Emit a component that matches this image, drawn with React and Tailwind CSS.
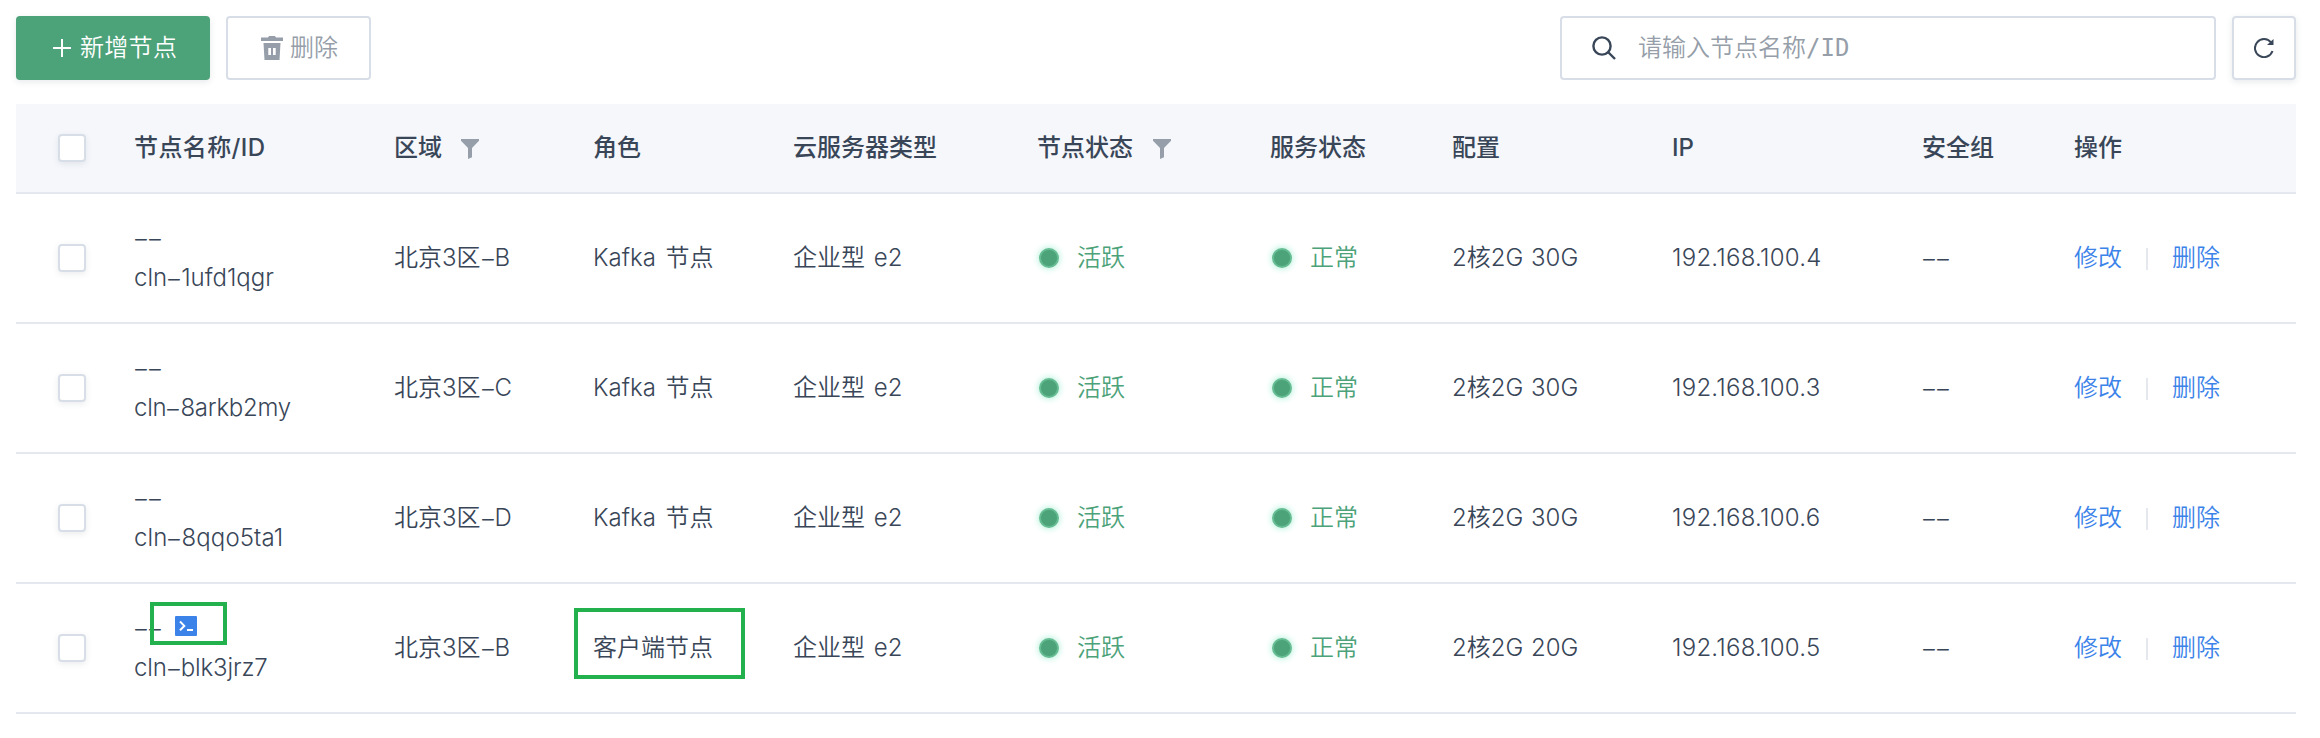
import React from 'react'

const COLUMNS = [
  { label: '节点名称/ID', spacing: 'tracking-[0.4px]' },
  { label: '区域', filter: true },
  { label: '角色' },
  { label: '云服务器类型' },
  { label: '节点状态', filter: true, spacing: 'mr-px' },
  { label: '服务状态' },
  { label: '配置' },
  { label: 'IP' },
  { label: '安全组' },
  { label: '操作' },
]

const NODES = [
  { id: 'cln-1ufd1qgr', zone: '北京3区-B', role: 'Kafka 节点', spec: '2核2G 30G', ip: '192.168.100.4' },
  { id: 'cln-8arkb2my', zone: '北京3区-C', role: 'Kafka 节点', spec: '2核2G 30G', ip: '192.168.100.3', spacing: 'tracking-[-0.25px]' },
  { id: 'cln-8qqo5ta1', zone: '北京3区-D', role: 'Kafka 节点', spec: '2核2G 30G', ip: '192.168.100.6', spacing: 'tracking-[0.1px]' },
  { id: 'cln-blk3jrz7', zone: '北京3区-B', role: '客户端节点', spec: '2核2G 20G', ip: '192.168.100.5', client: true, spacing: 'tracking-[-0.15px]' },
]

const GRID = 'grid grid-cols-[118px_260px_199px_200px_244px_233px_182px_220px_250px_152px_1fr] items-center border-b-2 border-[#e5e9ef]'

// Widens every hyphen in the string
function Dashed({ text }) {
  return (
    <span>
      {text.split('').map((ch, i) => (
        ch === '-'
          ? <span key={i} className="inline-block w-[14px] text-center tracking-normal scale-x-[1.6] translate-y-px">-</span>
          : ch
      ))}
    </span>
  )
}

function Checkbox() {
  return <span className="block w-7 h-7 ml-[42px] rounded-[4px] border-2 border-[#d8dee7] bg-white shadow-[0_2px_6px_rgba(57,70,88,0.1)]" />
}

function FilterIcon() {
  return (
    <svg className="w-[18px] h-5 ml-[19px] mt-[2px]" viewBox="0 0 18 20" fill="#959ea9">
      <path d="M0 0H18V1.8L11 9V18.2L7 20V9L0 1.8Z" />
    </svg>
  )
}

function TrashIcon() {
  return (
    <svg className="w-[22px] h-6" viewBox="0 0 22 24" fill="#959ea9">
      <path d="M0 1.5H7L8 0H14L15 1.5H22V5H0Z" />
      <path fillRule="evenodd" d="M2.5 7H19.5L18.5 24H3.5ZM7.3 12V19H10V12ZM12 12V19H14.7V12Z" />
    </svg>
  )
}

function TerminalIcon() {
  return (
    <svg className="w-[22px] h-5 ml-[13px] -mt-1" viewBox="0 0 22 20" fill="none">
      <rect width="22" height="20" rx="1" fill="#3c83e9" />
      <path d="M5 5.5L9.3 9.9L5 14.3" stroke="#fff" strokeWidth="2" />
      <path d="M12 14H18" stroke="#fff" strokeWidth="2" />
    </svg>
  )
}

function Status({ text }) {
  return (
    <div className="flex items-center text-[#4ca279]">
      <span className="w-5 h-5 ml-[2px] mr-[18px] rounded-full bg-[#4ca279] border-2 border-[#66bc93] shadow-[0_0_6px_1px_#b9f2dc]" />
      {text}
    </div>
  )
}

function NodeRow({ node }) {
  return (
    <div className={`${GRID} h-[130px]`}>
      <Checkbox />
      <div className="leading-10">
        <div className="relative flex items-center h-10">
          <Dashed text="--" />
          {node.client && (
            <>
              <TerminalIcon />
              <span className="absolute left-4 -top-[6px] w-[77px] h-[43px] border-4 border-[#22b14c]" />
            </>
          )}
        </div>
        <div className={node.spacing}><Dashed text={node.id} /></div>
      </div>
      <div><Dashed text={node.zone} /></div>
      <div className="relative [word-spacing:3px]">
        {node.role}
        {node.client && (
          <span className="absolute -left-[19px] -top-[26px] w-[171px] h-[71px] border-4 border-[#22b14c]" />
        )}
      </div>
      <div className="[word-spacing:2px]">企业型 e2</div>
      <Status text="活跃" />
      <Status text="正常" />
      <div className="[word-spacing:1px]">{node.spec}</div>
      <div className="tracking-[0.25px]">{node.ip}</div>
      <div><Dashed text="--" /></div>
      <div className="flex items-center text-[#3c83e9]">
        <span>修改</span>
        <span className="w-[2px] h-[22px] ml-6 mr-6 mt-[2px] bg-[#e5e9ef]" />
        <span>删除</span>
      </div>
    </div>
  )
}

export default function App() {
  return (
    <div className="w-[2320px] h-[738px] overflow-hidden bg-white px-4 pt-4 pr-6 font-['Inter','Noto_Sans_CJK_SC',sans-serif] font-[350] text-[24px] leading-[28px] text-[#394658]">
      {/* Toolbar */}
      <div className="flex items-center h-16">
        <button className="flex items-center w-[194px] h-16 pl-[37px] rounded-[4px] bg-[#4ca279] text-white shadow-[0_2px_6px_rgba(57,70,88,0.12)]">
          <svg className="w-[18px] h-[18px] mr-[9px]" viewBox="0 0 18 18" stroke="#fff" strokeWidth="2">
            <path d="M9 0V18M0 9H18" />
          </svg>
          <span className="tracking-[0.3px]">新增节点</span>
        </button>
        <button className="flex items-center w-[145px] h-16 ml-4 pl-[33px] rounded-[4px] border-2 border-[#d8dee7] text-[#959ea9]">
          <TrashIcon />
          <span className="ml-[7px]">删除</span>
        </button>
        <div className="flex items-center w-[656px] h-16 ml-auto pl-[30px] rounded-[4px] border-2 border-[#d8dee7]">
          <svg className="w-6 h-6" viewBox="0 0 24 24" fill="none" stroke="#394658" strokeWidth="2.4">
            <circle cx="10" cy="10" r="8.6" />
            <path d="M16 16L23 23" />
          </svg>
          <span className="ml-[22px] text-[#959ea9] font-['DejaVu_Sans_Mono','Noto_Sans_CJK_SC',monospace]">请输入节点名称/ID</span>
        </div>
        <button className="flex items-center justify-center w-16 h-16 ml-4 rounded-[4px] border-2 border-[#d8dee7] shadow-[0_2px_6px_rgba(57,70,88,0.12)]">
          <svg className="w-5 h-5" viewBox="0 0 20 20" fill="none" stroke="#394658" strokeWidth="2">
            <path d="M18.5 13A9 9 0 1 1 17 4.5" />
            <path d="M19.5 1V7H13Z" fill="#394658" stroke="none" />
          </svg>
        </button>
      </div>

      {/* Node table */}
      <div className="mt-6">
        <div className={`${GRID} h-[90px] bg-[#f5f7fb] font-medium`}>
          <Checkbox />
          {COLUMNS.map(col => (
            <div key={col.label} className="flex items-center">
              <span className={col.spacing}>{col.label}</span>
              {col.filter && <FilterIcon />}
            </div>
          ))}
        </div>
        {NODES.map(node => <NodeRow key={node.id} node={node} />)}
      </div>
    </div>
  )
}
